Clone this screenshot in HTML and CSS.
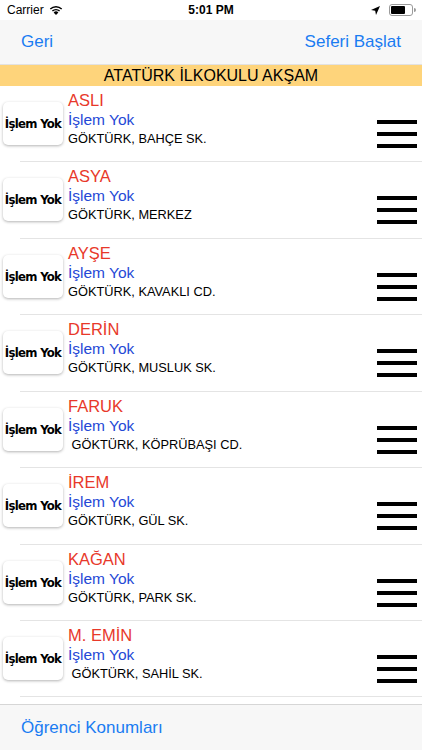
FILE: index.html
```html
<!DOCTYPE html>
<html>
<head>
<meta charset="utf-8">
<title>Öğrenci Listesi</title>
<link rel="stylesheet" href="styles.css">
</head>
<body>
  <div class="status">
    <div class="status-left">
      Carrier
      <svg class="wifi" width="14" height="10" viewBox="0 0 14 10">
        <path d="M7 10 L4.6 7.4 A3.4 3.4 0 0 1 9.4 7.4 Z" fill="#000"/>
        <path d="M2.9 5.6 A5.9 5.9 0 0 1 11.1 5.6 L10.1 6.6 A4.5 4.5 0 0 0 3.9 6.6 Z" fill="#000"/>
        <path d="M0.8 3.5 A8.9 8.9 0 0 1 13.2 3.5 L12.2 4.6 A7.5 7.5 0 0 0 1.8 4.6 Z" fill="#000"/>
      </svg>
    </div>
    <div class="status-time">5:01 PM</div>
    <div class="status-right">
      <svg class="arrow" width="9" height="9" viewBox="0 0 9 9">
        <path d="M9 0 L0 4 L4.2 4.8 L5 9 Z" fill="#000"/>
      </svg>
      <svg class="battery" width="27" height="12" viewBox="0 0 27 12">
        <rect x="0.5" y="0.5" width="23" height="11" rx="2.5" fill="none" stroke="#9a9a9a"/>
        <rect x="2" y="2" width="14" height="8" rx="1" fill="#000"/>
        <path d="M25 4 A2 2 0 0 1 25 8 Z" fill="#9a9a9a"/>
      </svg>
    </div>
  </div>

  <div class="navbar">
    <span class="nav-link">Geri</span>
    <span class="nav-link">Seferi Başlat</span>
  </div>

  <div class="banner">ATATÜRK İLKOKULU AKŞAM</div>

  <div class="list">
    <div class="row">
      <div class="logo">İşlem Yok</div>
      <div class="info">
        <div class="name">ASLI</div>
        <div class="state">İşlem Yok</div>
        <div class="addr">GÖKTÜRK, BAHÇE SK.</div>
      </div>
      <div class="menu"><i></i><i></i><i></i></div>
    </div>
    <div class="row">
      <div class="logo">İşlem Yok</div>
      <div class="info">
        <div class="name">ASYA</div>
        <div class="state">İşlem Yok</div>
        <div class="addr">GÖKTÜRK, MERKEZ</div>
      </div>
      <div class="menu"><i></i><i></i><i></i></div>
    </div>
    <div class="row">
      <div class="logo">İşlem Yok</div>
      <div class="info">
        <div class="name">AYŞE</div>
        <div class="state">İşlem Yok</div>
        <div class="addr">GÖKTÜRK, KAVAKLI CD.</div>
      </div>
      <div class="menu"><i></i><i></i><i></i></div>
    </div>
    <div class="row">
      <div class="logo">İşlem Yok</div>
      <div class="info">
        <div class="name">DERİN</div>
        <div class="state">İşlem Yok</div>
        <div class="addr">GÖKTÜRK, MUSLUK SK.</div>
      </div>
      <div class="menu"><i></i><i></i><i></i></div>
    </div>
    <div class="row">
      <div class="logo">İşlem Yok</div>
      <div class="info">
        <div class="name">FARUK</div>
        <div class="state">İşlem Yok</div>
        <div class="addr"> GÖKTÜRK, KÖPRÜBAŞI CD.</div>
      </div>
      <div class="menu"><i></i><i></i><i></i></div>
    </div>
    <div class="row">
      <div class="logo">İşlem Yok</div>
      <div class="info">
        <div class="name">İREM</div>
        <div class="state">İşlem Yok</div>
        <div class="addr">GÖKTÜRK, GÜL SK.</div>
      </div>
      <div class="menu"><i></i><i></i><i></i></div>
    </div>
    <div class="row">
      <div class="logo">İşlem Yok</div>
      <div class="info">
        <div class="name">KAĞAN</div>
        <div class="state">İşlem Yok</div>
        <div class="addr">GÖKTÜRK, PARK SK.</div>
      </div>
      <div class="menu"><i></i><i></i><i></i></div>
    </div>
    <div class="row">
      <div class="logo">İşlem Yok</div>
      <div class="info">
        <div class="name">M. EMİN</div>
        <div class="state">İşlem Yok</div>
        <div class="addr"> GÖKTÜRK, SAHİL SK.</div>
      </div>
      <div class="menu"><i></i><i></i><i></i></div>
    </div>
    <div class="row">
      <div class="logo">İşlem Yok</div>
      <div class="info">
        <div class="name">BURAK</div>
        <div class="state">İşlem Yok</div>
        <div class="addr">GÖKTÜRK, ÇAMLIK SK.</div>
      </div>
      <div class="menu"><i></i><i></i><i></i></div>
    </div>
  </div>

  <div class="toolbar">
    <span class="nav-link">Öğrenci Konumları</span>
  </div>
</body>
</html>
```

FILE: styles.css
```css
html, body
{
  margin: 0;
  padding: 0;
}

body
{
  width: 422px;
  height: 750px;
  overflow: hidden;
  display: flex;
  flex-direction: column;
  background: #fff;
  font-family: "Liberation Sans", Arial, sans-serif;
  color: #000;
}

/* status bar */
.status
{
  height: 20px;
  flex: none;
  display: grid;
  grid-template-columns: 1fr auto 1fr;
  align-items: center;
  font-size: 12px;
  background: #fff;
}
.status-left
{
  padding-left: 7px;
  display: flex;
  align-items: center;
  gap: 5px;
}
.status-time { font-weight: bold; }
.status-right
{
  display: flex;
  justify-content: flex-end;
  align-items: center;
  gap: 9px;
  padding-right: 6px;
}

/* navigation bar */
.navbar
{
  height: 44px;
  flex: none;
  display: flex;
  justify-content: space-between;
  align-items: center;
  padding: 0 21px;
  background: #f7f7f7;
  border-bottom: 1px solid #e2e2e2;
}
.nav-link
{
  color: #1a7cf2;
  font-size: 17px;
}

.banner
{
  height: 21px;
  flex: none;
  line-height: 21px;
  text-align: center;
  font-size: 16px;
  background: #fed47b;
}

/* list of students */
.list
{
  flex: 1;
  overflow: hidden;
}
.row
{
  height: 76.43px;
  display: flex;
  align-items: flex-start;
  box-sizing: border-box;
  background: linear-gradient(#e4e4e4, #e4e4e4) no-repeat 20px 100% / calc(100% - 20px) 1px;
}
.logo
{
  flex: none;
  width: 60px;
  height: 43px;
  margin: 16px 0 0 3px;
  display: flex;
  align-items: center;
  justify-content: center;
  background: #fff;
  border-radius: 5px;
  box-shadow: 0 1px 3px rgba(0,0,0,.3);
  font-family: "DejaVu Sans Condensed", "Liberation Sans", sans-serif;
  font-weight: bold;
  font-size: 13px;
  letter-spacing: -0.7px;
  white-space: nowrap;
}
.info
{
  margin-left: 5px;
  padding-top: 4px;
}
.name
{
  color: #e8382a;
  font-size: 16.5px;
  line-height: 20px;
}
.state
{
  color: #2448d6;
  font-size: 15.5px;
  line-height: 20px;
}
.addr
{
  font-size: 12.8px;
  line-height: 18px;
  white-space: pre;
}
.menu
{
  margin: 34px 5px 0 auto;
  width: 40px;
  display: flex;
  flex-direction: column;
  gap: 8px;
}
.menu i
{
  display: block;
  height: 4px;
  background: #000;
}

/* bottom toolbar */
.toolbar
{
  height: 45px;
  flex: none;
  display: flex;
  align-items: center;
  padding: 0 21px;
  background: #f7f7f7;
  border-top: 1px solid #d6d6d6;
}
```
